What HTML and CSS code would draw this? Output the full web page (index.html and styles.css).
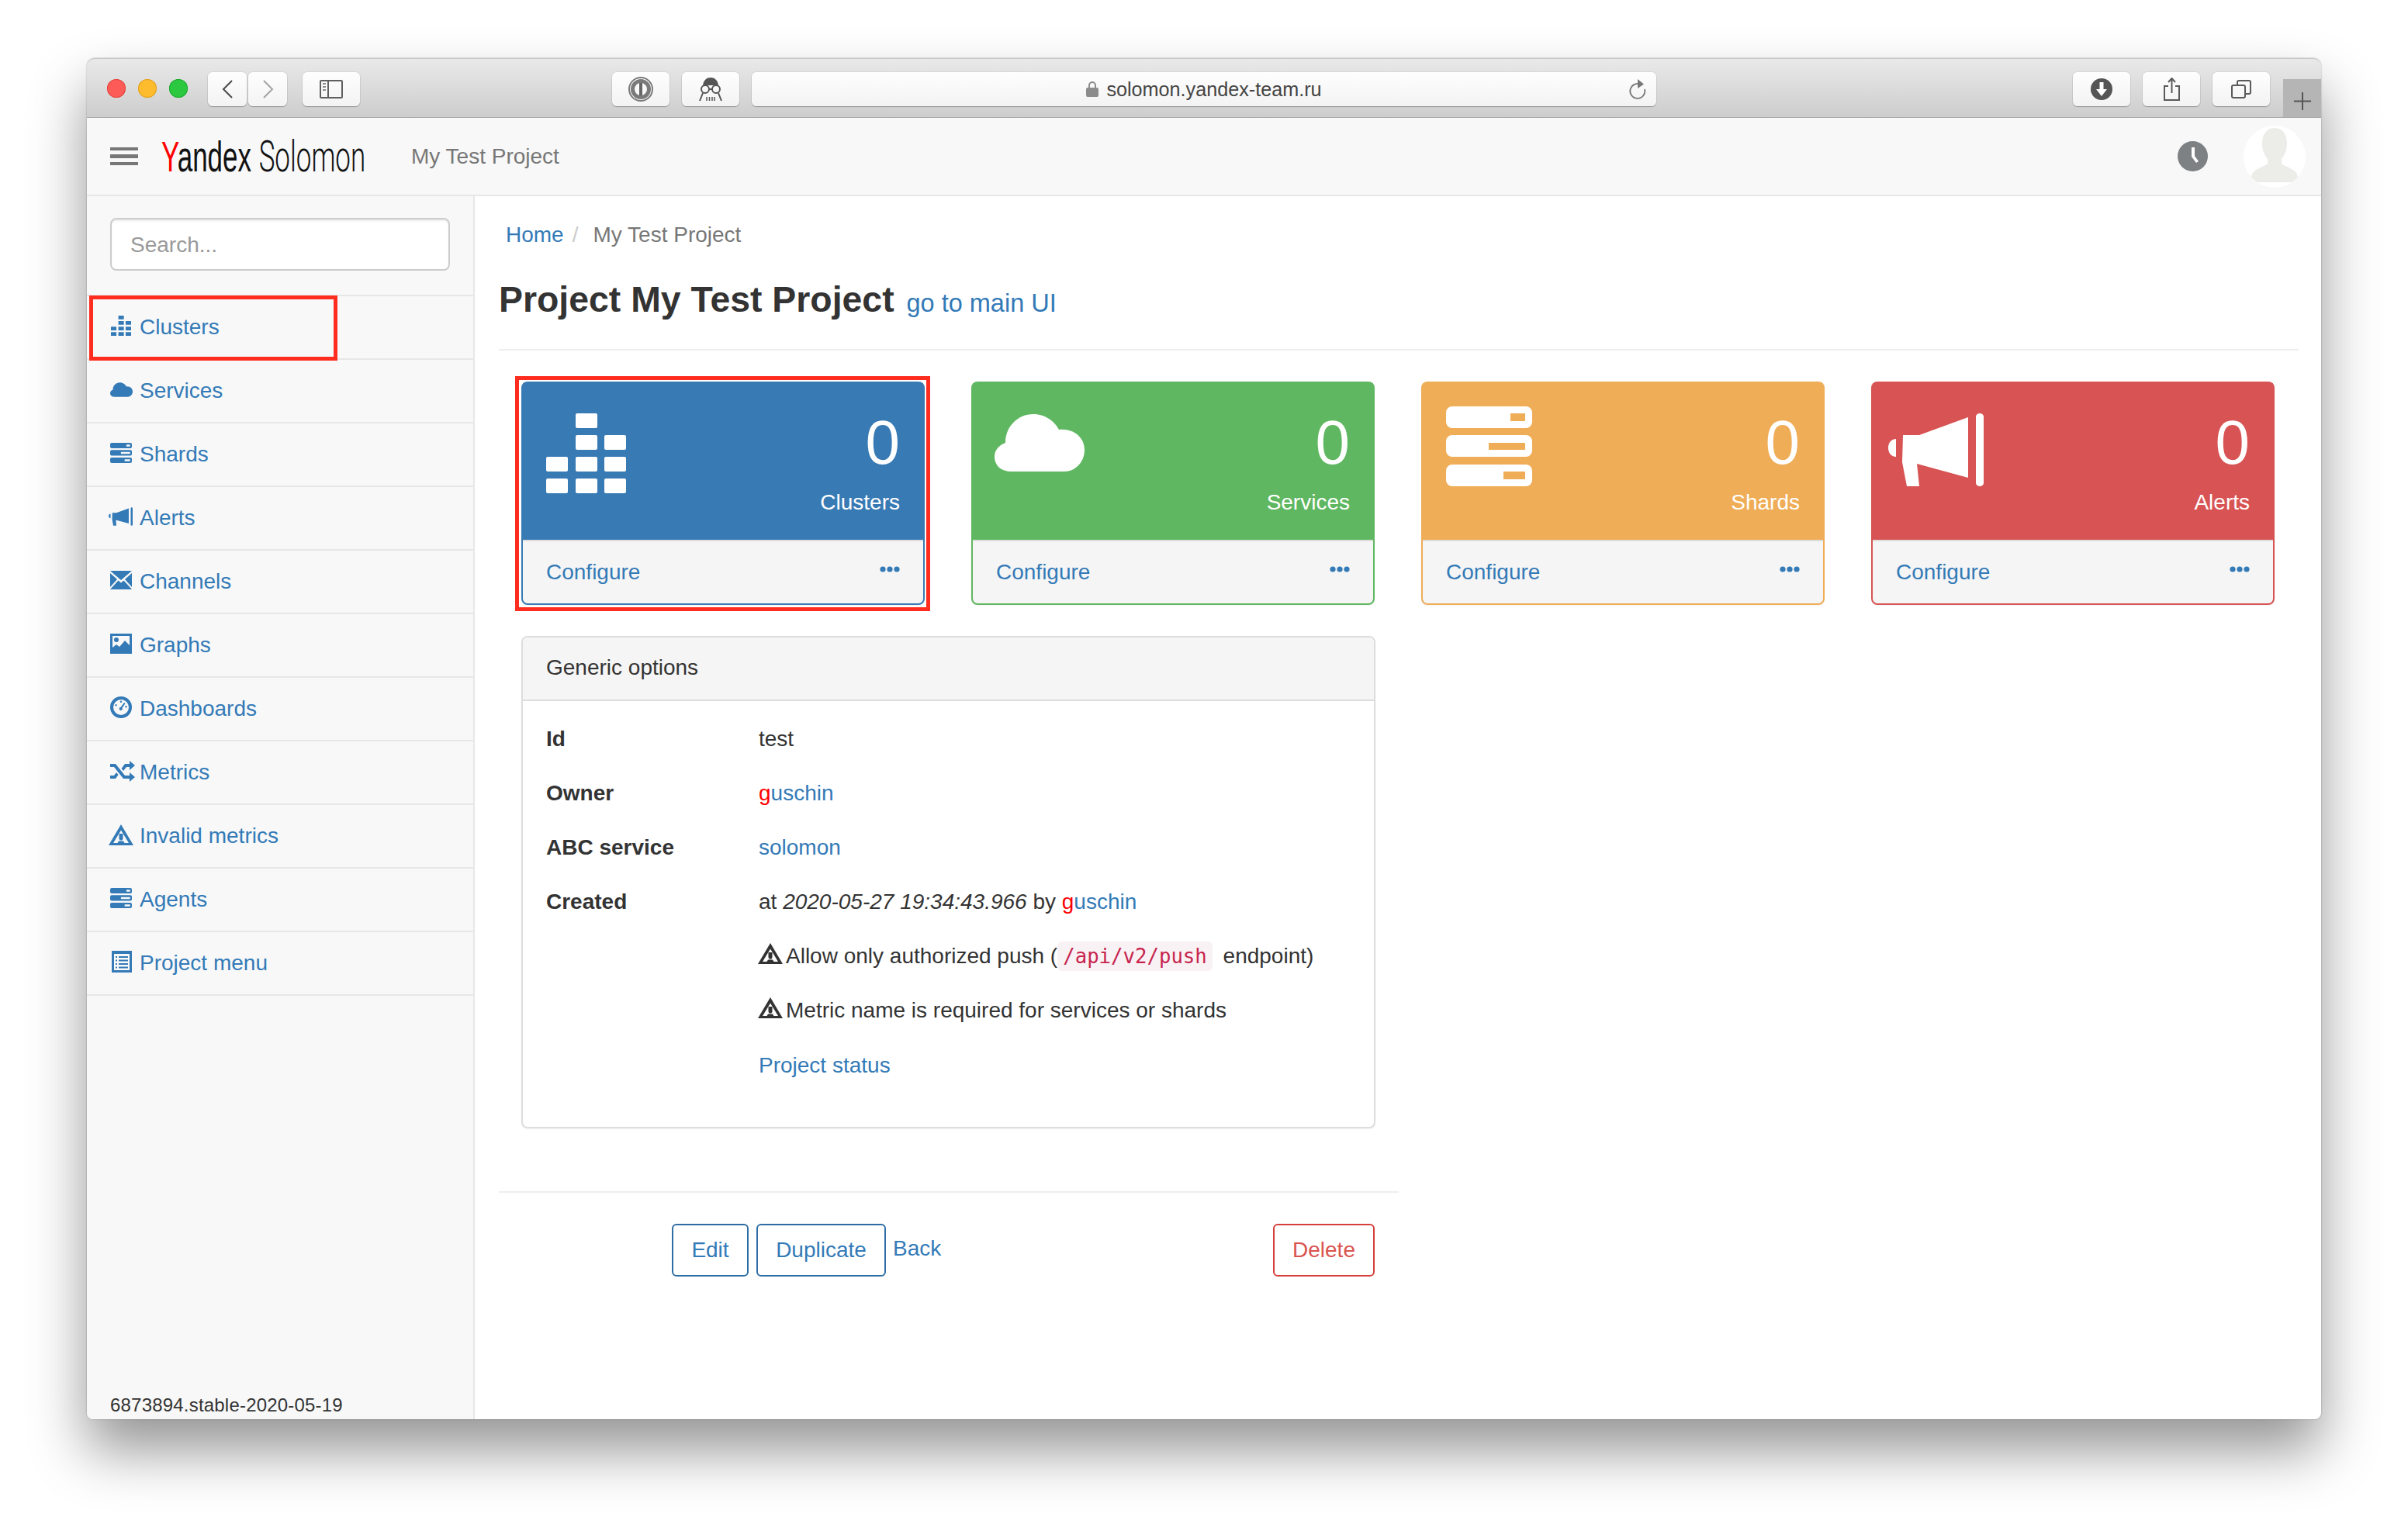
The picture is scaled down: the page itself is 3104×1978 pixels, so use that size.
FILE: index.html
```html
<!DOCTYPE html>
<html lang="en">
<head>
<meta charset="utf-8">
<title>Project My Test Project</title>
<link rel="stylesheet" href="styles.css">
</head>
<body>
<svg class="defs" aria-hidden="true">
  <symbol id="i-clusters" viewBox="0 0 103 103"><g fill="currentColor"><rect x="38" y="0" width="28" height="19" rx="2"/><rect x="38" y="28" width="28" height="19" rx="2"/><rect x="75" y="28" width="28" height="19" rx="2"/><rect x="0" y="56" width="28" height="19" rx="2"/><rect x="38" y="56" width="28" height="19" rx="2"/><rect x="75" y="56" width="28" height="19" rx="2"/><rect x="0" y="84" width="28" height="19" rx="2"/><rect x="38" y="84" width="28" height="19" rx="2"/><rect x="75" y="84" width="28" height="19" rx="2"/></g></symbol>
  <symbol id="i-cloud" viewBox="0 0 116 74"><path fill="currentColor" d="M22 74C8 74 0 66 0 55c0-9 6-15 14-18C14 16 30 0 50 0c16 0 28 10 33 20 19-2 33 10 33 26 0 16-12 28-26 28z"/></symbol>
  <symbol id="i-shards" viewBox="0 0 111 103"><path fill="currentColor" fill-rule="evenodd" d="M8 0h95a8 8 0 0 1 8 8v12a8 8 0 0 1-8 8H8a8 8 0 0 1-8-8V8a8 8 0 0 1 8-8zM83 9v10h19V9zM8 37h95a8 8 0 0 1 8 8v12a8 8 0 0 1-8 8H8a8 8 0 0 1-8-8V45a8 8 0 0 1 8-8zM55 47v9h47v-9zM8 75h95a8 8 0 0 1 8 8v12a8 8 0 0 1-8 8H8a8 8 0 0 1-8-8V83a8 8 0 0 1 8-8zM74 84v10h28V84z"/></symbol>
  <symbol id="i-alerts" viewBox="0 0 123 94"><path fill="currentColor" d="M10 33v23C4 56 0 51 0 44.500S4 33 10 33zM19 28h21L103 5v78L37 65l3 29H24l-6-31zM113 4a5 4 0 0 1 10 0v86a5 4 0 0 1-10 0z"/></symbol>
  <symbol id="i-mail" viewBox="0 0 28 24"><path fill="currentColor" d="M0 0h28L14 12zM0 3l9 8-9 10zM28 3v18l-9-10zM10.500 12.500L14 15.500l3.500-3L28 24H0z"/></symbol>
  <symbol id="i-picture" viewBox="0 0 28 26"><path fill="currentColor" fill-rule="evenodd" d="M0 0h28v26H0zM3 3v15l5-4 4 3 7-8 6 6V3zM8 5a3 3 0 1 1 0 6 3 3 0 0 1 0-6z"/></symbol>
  <symbol id="i-gauge" viewBox="0 0 28 28"><path fill="currentColor" fill-rule="evenodd" d="M14 0a14 14 0 1 1 0 28 14 14 0 0 1 0-28zM14 4a10 10 0 1 0 0 20 10 10 0 0 0 0-20zM18 8l1.500 1-4 6a2 2 0 1 1-2-1zM14 5.500a1.200 1.200 0 1 1 0 2.400 1.200 1.200 0 0 1 0-2.400zM7.500 10a1.200 1.200 0 1 1 0 2.400 1.200 1.200 0 0 1 0-2.400zM20.500 12a1.200 1.200 0 1 1 0 2.400 1.200 1.200 0 0 1 0-2.400z"/></symbol>
  <symbol id="i-random" viewBox="0 0 32 27"><path fill="currentColor" d="M25 0l7 6-7 6V8h-4l-4 5-2.500-3L19 4h6zM0 4h7l12 15h6v-4l7 6-7 6v-4h-8L5 8H0zM0 19h5l3-4 2.500 3L7 23H0z"/></symbol>
  <symbol id="i-warn" viewBox="0 0 32 27"><path fill="currentColor" fill-rule="evenodd" d="M16 0l16 27H0zM16 7.500L6 24h20z"/><path fill="currentColor" d="M13.500 12h5v6.500l-1 2h-3l-1-2zM11.500 24l1.500-2.500h6l1.500 2.500z"/></symbol>
  <symbol id="i-list" viewBox="0 0 26 28"><path fill="currentColor" fill-rule="evenodd" d="M0 0h26v28H0zM3 4v21h20V4zM5 7h2v2H5zM9 7h12v2H9zM5 11.500h2v2H5zM9 11.500h12v2H9zM5 16h2v2H5zM9 16h12v2H9zM5 20.500h2v2H5zM9 20.500h12v2H9z"/></symbol>
  <symbol id="i-dots" viewBox="0 0 26 8"><g fill="currentColor"><circle cx="4" cy="4" r="3.600"/><circle cx="13" cy="4" r="3.600"/><circle cx="22" cy="4" r="3.600"/></g></symbol>
</svg>

<div class="window">
  <header class="toolbar">
    <span class="light light-red"></span><span class="light light-yellow"></span><span class="light light-green"></span>
    <span class="tb-btn tb-nav tb-first"><svg width="15" height="24" viewBox="0 0 15 24"><path d="M13 1L2 12l11 11" fill="none" stroke="#4a4a4a" stroke-width="2"/></svg></span>
    <span class="tb-btn tb-nav tb-next"><svg width="15" height="24" viewBox="0 0 15 24"><path d="M2 1l11 11L2 23" fill="none" stroke="#a3a3a3" stroke-width="2"/></svg></span>
    <span class="tb-btn tb-side"><svg width="30" height="24" viewBox="0 0 30 24"><g fill="none" stroke="#5f5f5f" stroke-width="2"><rect x="1" y="1" width="28" height="22" rx="1"/><path d="M11 1v22"/></g><path d="M4 5h4M4 9h4M4 13h4" stroke="#8a8a8a" stroke-width="2"/></svg></span>
    <span class="tb-btn tb-onepass"><svg width="32" height="32" viewBox="0 0 32 32"><circle cx="16" cy="16" r="15" fill="none" stroke="#7a7a7a" stroke-width="2"/><circle cx="16" cy="16" r="10.500" fill="none" stroke="#7a7a7a" stroke-width="5"/><rect x="14" y="8" width="4" height="16" fill="#666"/></svg></span>
    <span class="tb-btn tb-spy"><svg width="32" height="32" viewBox="0 0 32 32"><path d="M6 11C7 4 11 1 16 1s9 3 10 10z" fill="#555"/><g fill="none" stroke="#555" stroke-width="2"><circle cx="9" cy="16" r="5"/><circle cx="23" cy="16" r="5"/><path d="M14 16h4M6 21L2 31M26 21l4 10"/></g><path d="M11 26v5M14.500 26v5M18 26v5M21 26v5" stroke="#555" stroke-width="1.500"/></svg></span>
    <span class="tb-btn tb-url">
      <span></span>
      <span class="url-text"><svg class="lock" width="18" height="21" viewBox="0 0 18 21"><path d="M5 9V6a4 4 0 0 1 8 0v3" fill="none" stroke="#8c8c8c" stroke-width="2"/><rect x="1" y="9" width="16" height="12" rx="2" fill="#8c8c8c"/></svg>solomon.yandex-team.ru</span>
      <svg class="reload" width="22" height="26" viewBox="0 0 22 26"><path d="M16 7.500A9.500 9.500 0 1 0 20 13" fill="none" stroke="#777" stroke-width="1.800"/><path d="M11 0l8 6.500L11 12z" fill="#777"/></svg>
    </span>
    <span class="tb-btn tb-download"><svg width="28" height="28" viewBox="0 0 28 28"><circle cx="14" cy="14" r="14" fill="#555"/><path d="M11.500 5h5v9H21l-7 9-7-9h4.500z" fill="#fff"/></svg></span>
    <span class="tb-btn tb-share"><svg width="21" height="30" viewBox="0 0 21 30"><path d="M6 11H1v18h19V11h-5M10.500 20V2M6 6l4.500-5L15 6" fill="none" stroke="#5a5a5a" stroke-width="2"/></svg></span>
    <span class="tb-btn tb-tabs"><svg width="26" height="24" viewBox="0 0 26 24"><g fill="none" stroke="#5a5a5a" stroke-width="2"><rect x="1" y="7" width="17" height="16" rx="2"/><path d="M8 7V3a2 2 0 0 1 2-2h13a2 2 0 0 1 2 2v13a2 2 0 0 1-2 2h-5"/></g></svg></span>
    <span class="tb-plus"><svg width="22" height="23" viewBox="0 0 22 23"><path d="M11 0v23M0 11.500h22" stroke="#555" stroke-width="2"/></svg></span>
  </header>

  <nav class="navbar">
    <span class="burger"><i></i><i></i><i></i></span>
    <span class="brand"><span class="brand-y">Y</span>andex <span class="brand-light">Solomon</span></span>
    <span class="nav-project">My Test Project</span>
    <svg class="clock" width="39" height="39" viewBox="0 0 39 39"><circle cx="19.500" cy="19.500" r="19.500" fill="#7d8184"/><path d="M18 8h4v11l5 7-3 2-6-8z" fill="#fff"/></svg>
    <span class="avatar"><svg width="60" height="72" viewBox="0 0 60 72"><path fill="#ecece9" d="M30 0c11 0 16 9 16 20 0 9-3 15-7 20v6c4 4 21 7 21 18v6H0v-6c0-11 17-14 21-18v-6c-4-5-7-11-7-20C14 9 19 0 30 0z"/></svg></span>
  </nav>

  <div class="body">
    <aside class="sidebar">
      <div class="search-wrap"><input class="search" type="text" placeholder="Search..."></div>
      <ul class="side-list">
        <li class="side-item"><a class="side-link" href="#"><span class="side-icon"><svg class="s-28-26"><use href="#i-clusters"/></svg></span>Clusters</a></li>
        <li class="side-item"><a class="side-link" href="#"><span class="side-icon"><svg class="s-cloud"><use href="#i-cloud"/></svg></span>Services</a></li>
        <li class="side-item"><a class="side-link" href="#"><span class="side-icon"><svg class="s-28-26"><use href="#i-shards"/></svg></span>Shards</a></li>
        <li class="side-item"><a class="side-link" href="#"><span class="side-icon"><svg class="s-horn"><use href="#i-alerts"/></svg></span>Alerts</a></li>
        <li class="side-item"><a class="side-link" href="#"><span class="side-icon"><svg class="s-mail"><use href="#i-mail"/></svg></span>Channels</a></li>
        <li class="side-item"><a class="side-link" href="#"><span class="side-icon"><svg class="s-28-26"><use href="#i-picture"/></svg></span>Graphs</a></li>
        <li class="side-item"><a class="side-link" href="#"><span class="side-icon"><svg class="s-gauge"><use href="#i-gauge"/></svg></span>Dashboards</a></li>
        <li class="side-item"><a class="side-link" href="#"><span class="side-icon"><svg class="s-random"><use href="#i-random"/></svg></span>Metrics</a></li>
        <li class="side-item"><a class="side-link" href="#"><span class="side-icon"><svg class="s-warn"><use href="#i-warn"/></svg></span>Invalid metrics</a></li>
        <li class="side-item"><a class="side-link" href="#"><span class="side-icon"><svg class="s-28-26"><use href="#i-shards"/></svg></span>Agents</a></li>
        <li class="side-item"><a class="side-link" href="#"><span class="side-icon"><svg class="s-list"><use href="#i-list"/></svg></span>Project menu</a></li>
      </ul>
      <div class="version">6873894.stable-2020-05-19</div>
      <span class="mark mark-side"></span>
    </aside>

    <main class="main">
      <div class="crumbs"><a href="#">Home</a><span class="crumb-sep">/</span><span class="crumb-cur">My Test Project</span></div>
      <h1 class="title">Project My Test Project <a class="title-link" href="#">go to main UI</a></h1>

      <div class="cards">
        <section class="card card-blue">
          <div class="card-head">
            <svg class="ic-clusters"><use href="#i-clusters"/></svg>
            <div class="card-num"><div class="num">0</div><div class="num-label">Clusters</div></div>
          </div>
          <div class="card-foot"><a href="#">Configure</a><svg class="dots"><use href="#i-dots"/></svg></div>
          <span class="mark mark-card"></span>
        </section>
        <section class="card card-green">
          <div class="card-head">
            <svg class="ic-cloud"><use href="#i-cloud"/></svg>
            <div class="card-num"><div class="num">0</div><div class="num-label">Services</div></div>
          </div>
          <div class="card-foot"><a href="#">Configure</a><svg class="dots"><use href="#i-dots"/></svg></div>
        </section>
        <section class="card card-orange">
          <div class="card-head">
            <svg class="ic-shards"><use href="#i-shards"/></svg>
            <div class="card-num"><div class="num">0</div><div class="num-label">Shards</div></div>
          </div>
          <div class="card-foot"><a href="#">Configure</a><svg class="dots"><use href="#i-dots"/></svg></div>
        </section>
        <section class="card card-red">
          <div class="card-head">
            <svg class="ic-alerts"><use href="#i-alerts"/></svg>
            <div class="card-num"><div class="num">0</div><div class="num-label">Alerts</div></div>
          </div>
          <div class="card-foot"><a href="#">Configure</a><svg class="dots"><use href="#i-dots"/></svg></div>
        </section>
      </div>

      <section class="panel">
        <div class="panel-head">Generic options</div>
        <div class="panel-body">
          <div class="p-label">Id</div><div class="p-value">test</div>
          <div class="p-label">Owner</div><div class="p-value"><a href="#"><span class="red">g</span>uschin</a></div>
          <div class="p-label">ABC service</div><div class="p-value"><a href="#">solomon</a></div>
          <div class="p-label">Created</div><div class="p-value">at <em>2020-05-27 19:34:43.966</em> by <a href="#"><span class="red">g</span>uschin</a></div>
          <div class="p-value p-only"><svg class="warn"><use href="#i-warn"/></svg>Allow only authorized push (<code class="code">/api/v2/push</code> endpoint)</div>
          <div class="p-value p-only"><svg class="warn"><use href="#i-warn"/></svg>Metric name is required for services or shards</div>
          <div class="p-value p-only"><a href="#">Project status</a></div>
        </div>
      </section>

      <div class="actions">
        <a class="btn btn-blue btn-edit" href="#">Edit</a>
        <a class="btn btn-blue btn-dup" href="#">Duplicate</a>
        <a class="back" href="#">Back</a>
        <a class="btn btn-danger" href="#">Delete</a>
      </div>
    </main>
  </div>
</div>
</body>
</html>
```
FILE: styles.css
```css
* { box-sizing: border-box; }
html, body { margin: 0; padding: 0; background: #fff; }
body {
  width: 3104px;
  height: 1978px;
  overflow: hidden;
  padding: 75px 112px 0;
  font: 28px/40px "Liberation Sans", Arial, sans-serif;
  color: #333;
}
a { color: #337ab7; text-decoration: none; }
.defs { width: 0; height: 0; display: block; position: absolute; }

.window {
  width: 2880px;
  height: 1755px;
  display: flex;
  flex-direction: column;
  border-radius: 10px 10px 8px 8px;
  background: #fff;
  box-shadow: 0 40px 72px rgba(0,0,0,.42), 0 0 2px rgba(0,0,0,.35);
  overflow: visible;
}

/* Safari toolbar */
.toolbar {
  height: 77px;
  flex: none;
  display: flex;
  align-items: center;
  padding-left: 26px;
  border-radius: 10px 10px 0 0;
  background: linear-gradient(#e9e9e9, #cdcdcd);
  border-top: 1px solid #c4c4c4;
  border-bottom: 1px solid #aaa;
}
.light { width: 24px; height: 24px; border-radius: 50%; margin-right: 16px; flex: none; }
.light-red { background: #fc5b57; box-shadow: inset 0 0 0 1px #e3443f; }
.light-yellow { background: #fdbc2e; box-shadow: inset 0 0 0 1px #dfa023; }
.light-green { background: #2bc840; box-shadow: inset 0 0 0 1px #1fa92f; }
.tb-btn {
  height: 44px;
  flex: none;
  display: flex;
  align-items: center;
  justify-content: center;
  border-radius: 6px;
  background: linear-gradient(#fefefe, #f3f3f3);
  box-shadow: 0 1px 1px rgba(0,0,0,.3), 0 0 0 1px rgba(0,0,0,.05);
}
.tb-nav { width: 50px; }
.tb-first { margin-left: 10px; margin-right: 2px; margin-top: 2px; }
.tb-next { margin-top: 2px; }
.tb-side { width: 74px; margin-left: 20px; margin-top: 2px; }
.tb-onepass { width: 74px; margin-left: 325px; margin-top: 2px; }
.tb-spy { width: 74px; margin-left: 16px; margin-top: 2px; }
.tb-url {
  width: 1166px;
  margin-left: 16px;
  margin-top: 2px;
  display: grid;
  grid-template-columns: 1fr auto 1fr;
  padding: 0 13px 0 12px;
  color: #444;
  font-size: 25.200px;
}
.url-text { display: flex; align-items: center; }
.lock { margin-right: 9px; }
.reload { justify-self: end; }
.tb-download { width: 74px; margin-left: 537px; margin-top: 2px; }
.tb-share { width: 74px; margin-left: 16px; margin-top: 2px; }
.tb-tabs { width: 74px; margin-left: 16px; margin-top: 2px; }
.tb-plus {
  align-self: flex-end;
  width: 49px;
  height: 49px;
  margin-left: 17px;
  background: #b5b5b5;
  display: flex;
  align-items: center;
  justify-content: center;
  padding-top: 8px;
}

/* Navbar */
.navbar {
  height: 101px;
  flex: none;
  display: flex;
  align-items: center;
  background: #f8f8f8;
  border-bottom: 2px solid #e7e7e7;
  padding-left: 30px;
}
.burger { width: 36px; display: flex; flex-direction: column; gap: 5px; }
.burger i { display: block; height: 4.500px; background: #777; }
.brand {
  margin-left: 30px;
  width: 260px;
  font-size: 56px;
  line-height: 60px;
  color: #111;
  white-space: nowrap;
  transform: scaleX(.624);
  transform-origin: 0 50%;
}
.brand-y { color: #f00; }
.brand-light { font-family: Roboto, "Liberation Sans", sans-serif; font-weight: 300; color: #111; }
.nav-project { margin-left: 62px; color: #777; }
.clock { margin-left: auto; }
.avatar {
  width: 80px;
  height: 80px;
  margin-left: 46px;
  margin-right: 20px;
  border-radius: 50%;
  background: #fff;
  overflow: hidden;
  display: flex;
  justify-content: center;
  align-items: flex-end;
  padding-bottom: 5px;
}

/* Body */
.body { flex: 1; display: flex; min-height: 0; }
.sidebar {
  position: relative;
  width: 500px;
  flex: none;
  display: flex;
  flex-direction: column;
  background: #f8f8f8;
  border-right: 2px solid #e7e7e7;
  border-radius: 0 0 0 8px;
}
.search-wrap { padding: 28px 30px 31px; border-bottom: 2px solid #e7e7e7; }
.search {
  display: block;
  width: 438px;
  height: 68px;
  padding: 2px 24px 0;
  font: 28px "Liberation Sans", sans-serif;
  color: #555;
  border: 2px solid #ccc;
  border-radius: 8px;
  background: #fff;
  box-shadow: inset 0 2px 2px rgba(0,0,0,.075);
  outline: 0;
}
.search::placeholder { color: #999; opacity: 1; }
.side-list { list-style: none; margin: 0; padding: 0; }
.side-item { height: 82px; border-bottom: 2px solid #e7e7e7; }
.side-link { height: 80px; display: flex; align-items: center; padding-left: 30px; }
.side-icon { width: 38px; height: 30px; flex: none; display: flex; align-items: center; color: #337ab7; margin-top: -4px; }
.side-icon svg { display: block; }
.s-28-26 { width: 28px; height: 26px; }
.s-cloud { width: 29px; height: 19px; }
.s-horn { width: 31px; height: 24px; margin-left: -2px; }
.s-mail { width: 28px; height: 24px; }
.s-gauge { width: 28px; height: 28px; }
.s-random { width: 32px; height: 27px; }
.s-warn { width: 32px; height: 27px; margin-left: -2px; }
.s-list { width: 26px; height: 28px; margin-left: 2px; }
.version {
  margin-top: auto;
  padding: 0 0 0 30px;
  font-size: 24px;
  line-height: 28px;
  letter-spacing: .2px;
  height: 32px;
}

/* Annotations */
.mark { position: absolute; border: 5px solid #ff2d20; pointer-events: none; }
.mark-side { left: 3px; top: 128px; width: 320px; height: 84px; }
.mark-card { left: -10px; top: -9px; width: 535px; height: 303px; }

/* Main */
.main { flex: 1; min-width: 0; padding: 0 29px 0 31px; }
.crumbs { margin-top: 30px; padding-left: 9px; color: #777; height: 40px; }
.crumb-sep { color: #ccc; margin: 0 19px 0 11px; }
.title {
  margin: 37px 0 0;
  height: 92px;
  border-bottom: 2px solid #eee;
  font-size: 46.400px;
  line-height: 52px;
  font-weight: bold;
}
.title-link { font-size: 32.500px; font-weight: normal; margin-left: 3px; }

.cards {
  display: grid;
  grid-template-columns: repeat(4, 520px);
  column-gap: 60px;
  margin: 40px 0 0 29px;
}
.card {
  position: relative;
  height: 288px;
  border: 2px solid var(--tone);
  border-radius: 8px;
  display: flex;
  flex-direction: column;
  background: #f5f5f5;
  box-shadow: 0 1px 2px rgba(0,0,0,.05);
}
.card-blue { --tone: #387ab4; }
.card-green { --tone: #60b761; }
.card-orange { --tone: #efad57; }
.card-red { --tone: #d85454; }
.card-head {
  height: 202px;
  flex: none;
  display: flex;
  justify-content: space-between;
  background: var(--tone);
  color: #fff;
  padding: 0 30px;
}
.ic-clusters { width: 103px; height: 103px; margin: 39px 0 0; }
.ic-cloud { width: 116px; height: 74px; margin: 40px 0 0 -2px; }
.ic-shards { width: 111px; height: 103px; margin: 30px 0 0 0; }
.ic-alerts { width: 123px; height: 94px; margin: 39px 0 0 -10px; }
.card-num { text-align: right; }
.num { font-size: 80px; line-height: 80px; margin-top: 37px; }
.num-label { line-height: 40px; margin-top: 17px; }
.card-foot {
  flex: 1;
  display: flex;
  justify-content: space-between;
  padding: 20px 30px 0;
  border-top: 2px solid #ddd;
  border-radius: 0 0 6px 6px;
}
.dots { width: 26px; height: 8px; color: #337ab7; margin-top: 12px; }

.panel {
  width: 1101px;
  height: 635px;
  margin: 40px 0 0 29px;
  border: 2px solid #ddd;
  border-radius: 8px;
  box-shadow: 0 1px 2px rgba(0,0,0,.05);
}
.panel-head {
  height: 82px;
  padding: 19px 30px 0;
  background: #f5f5f5;
  border-bottom: 2px solid #ddd;
  border-radius: 6px 6px 0 0;
}
.panel-body {
  display: grid;
  grid-template-columns: 274px 1fr;
  grid-auto-rows: 40px;
  row-gap: 30.100px;
  padding: 29px 30px 0;
}
.p-label { font-weight: bold; }
.p-only { grid-column: 2; }
.red { color: #f00; }
.warn { width: 32px; height: 27px; margin: 0 4px -1px -1px; color: #333; }
.code {
  font: 25.700px "DejaVu Sans Mono", monospace;
  color: #c7254e;
  background: #f9f2f4;
  padding: 4px 7px;
  border-radius: 6px;
  margin-right: 6px;
}

.actions {
  width: 1160px;
  margin-top: 81px;
  padding: 40px 31px 0 223px;
  border-top: 2px solid #eee;
  display: flex;
  align-items: flex-start;
}
.btn {
  height: 68px;
  display: flex;
  align-items: center;
  justify-content: center;
  border: 2px solid;
  border-radius: 6px;
  background: #fff;
}
.btn-blue { color: #337ab7; border-color: #2e6da4; }
.btn-edit { width: 99px; margin-right: 10px; }
.btn-dup { width: 167px; }
.back { margin: 12px 0 0 9px; }
.btn-danger { width: 131px; margin-left: auto; color: #d9534f; border-color: #d43f3a; }
```
